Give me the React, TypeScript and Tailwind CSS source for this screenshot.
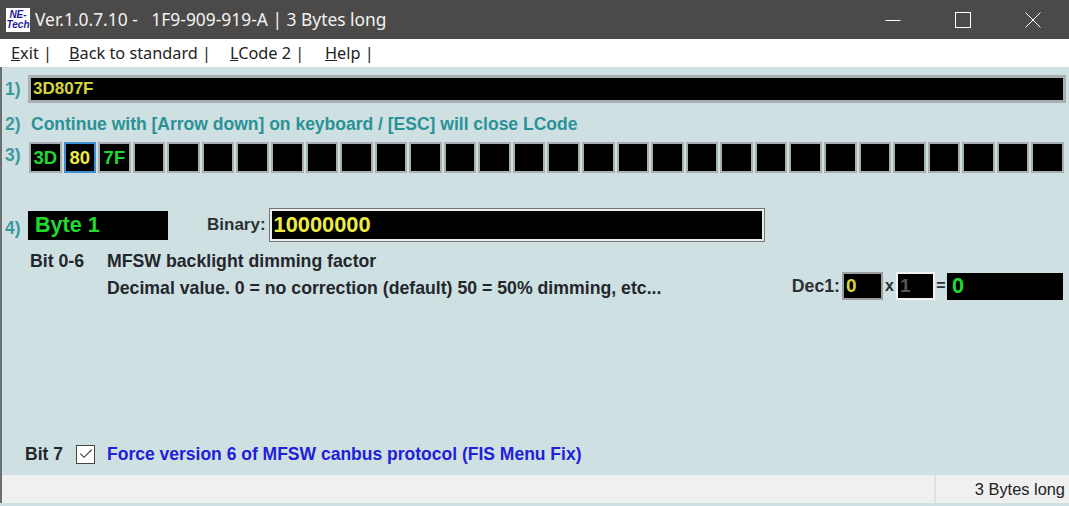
import { Check } from "lucide-react"

const codes = ["3D", "80", "7F"]

function RowLabel({ text, className = "" }: { text: string; className?: string }) {
  return <span className={`w-[24px] shrink-0 pl-[3px] text-[17.5px] font-bold text-[#3a9a9e] ${className}`}>{text}</span>
}

function Logo() {
  return (
    <div className="flex h-[24px] w-[24px] shrink-0 flex-col items-center justify-center bg-white font-['Liberation_Sans',sans-serif] font-bold italic text-[#1c1c9c]">
      <span className="text-[10px] leading-[10px]">NE-</span>
      <span className="text-[10px] leading-[10px]">Tech</span>
    </div>
  )
}

export default function App() {
  const cells = Array.from({ length: 30 }, (_, i) => codes[i] ?? "")

  return (
    <div className="flex h-[506px] w-[1069px] flex-col overflow-hidden bg-[#cfe0e3] font-['Liberation_Sans',sans-serif]">
      {/* title bar */}
      <div className="flex h-[39px] items-center bg-[#4c4a48] pl-[6px] text-white">
        <Logo />
        <span className="ml-[5px] whitespace-pre font-['Noto_Sans',sans-serif] text-[17.4px] text-[#f2f2f2]">
          Ver.1.0.7.10 -   1F9-909-919-A | 3 Bytes long
        </span>
        <div className="ml-auto flex items-center pr-[1px]">
          <div className="flex w-[70px] justify-center">
            <svg width="16" height="16" viewBox="0 0 16 16" fill="none" stroke="currentColor">
              <path d="M0.5 8.5H15.5" />
            </svg>
          </div>
          <div className="flex w-[70px] justify-center">
            <svg width="16" height="16" viewBox="0 0 16 16" fill="none" stroke="currentColor">
              <rect x="0.5" y="0.5" width="15" height="15" />
            </svg>
          </div>
          <div className="flex w-[70px] justify-center">
            <svg width="16" height="16" viewBox="0 0 16 16" fill="none" stroke="currentColor">
              <path d="M0.5 0.5L15.5 15.5M15.5 0.5L0.5 15.5" />
            </svg>
          </div>
        </div>
      </div>

      {/* menu */}
      <div className="flex h-[28px] items-center bg-white pl-[11px] font-['Noto_Sans',sans-serif] text-[16.3px] text-[#222]">
        <span className="w-[58px]"><u>E</u>xit |</span>
        <span className="w-[161px]"><u>B</u>ack to standard |</span>
        <span className="w-[95px]"><u>L</u>Code 2 |</span>
        <span><u>H</u>elp |</span>
      </div>

      {/* form */}
      <div className="flex flex-1 flex-col border-l-2 border-[#6a6f70] pr-[3px]">
        <div className="mt-[8px] flex h-[28px] items-center">
          <RowLabel text="1)" />
          <div className="ml-[2px] flex h-[28px] flex-1 items-center border-[3px] border-[#a9afb0] bg-black pl-[2px] text-[17px] font-bold text-[#d6d63c]">
            3D807F
          </div>
        </div>

        <div className="mt-[8px] flex h-[26px] items-center">
          <RowLabel text="2)" />
          <span className="ml-[5px] whitespace-nowrap text-[17.5px] font-bold text-[#2a9296]">
            Continue with [Arrow down] on keyboard / [ESC] will close LCode
          </span>
        </div>

        <div className="mt-[5px] mr-[2px] flex h-[31px] items-center">
          <RowLabel text="3)" className="mb-[4px]" />
          <div className="ml-[3px] grid flex-1 grid-cols-[repeat(30,1fr)] gap-[2px]">
            {cells.map((c, i) => (
              <div
                key={i}
                className={`flex h-[31px] items-center justify-center border-[2px] bg-black text-[18.5px] font-bold ${
                  i === 1 ? "border-[#3f8fd0] text-[#eded40]" : "border-[#a9afb0] text-[#22d92e]"
                }`}
              >
                {c}
              </div>
            ))}
          </div>
        </div>

        <div className="mt-[37px] flex h-[30px] items-center">
          <RowLabel text="4)" className="mt-[7px]" />
          <div className="ml-[2px] flex h-[29px] w-[140px] items-center bg-black pl-[7px] text-[21.6px] font-bold text-[#22d92e]">
            Byte 1
          </div>
          <span className="ml-[39px] text-[17px] font-bold text-[#2c3034]">Binary:</span>
          <div className="ml-[4px] flex h-[32px] w-[494px] items-center border-[2px] border-[#e8eeee] bg-black pl-[2px] text-[21.8px] font-bold text-[#eded40] outline outline-1 outline-[#777]">
            10000000
          </div>
        </div>

        <div className="mt-[8px] flex">
          <span className="w-[105px] whitespace-nowrap pl-[28px] text-[17.7px] font-bold leading-[27px] text-[#23272b]">Bit 0-6</span>
          <div className="whitespace-nowrap text-[17.7px] font-bold leading-[27px] text-[#23272b]">
            <div>MFSW backlight dimming factor</div>
            <div>Decimal value. 0 = no correction (default) 50 = 50% dimming, etc...</div>
          </div>
          <div className="ml-auto mt-[24px] mr-[3px] flex h-[28px] items-center">
            <span className="text-[17.7px] font-bold text-[#2c3034]">Dec1:</span>
            <div className="ml-[2px] flex h-[28px] w-[41px] items-center border-[2px] border-[#9aa0a2] bg-black pl-[2px] text-[19px] font-bold text-[#d6d63c]">
              0
            </div>
            <span className="w-[13px] text-center text-[16px] font-bold text-[#2c3034]">x</span>
            <div className="flex h-[28px] w-[39px] items-center border-[2px] border-[#eef2f2] bg-black pl-[2px] text-[19px] font-bold text-[#555]">
              1
            </div>
            <span className="w-[12px] text-center text-[16px] font-bold text-[#2c3034]">=</span>
            <div className="flex h-[27px] w-[116px] items-center bg-black pl-[5px] text-[21.6px] font-bold text-[#22d92e]">
              0
            </div>
          </div>
        </div>

        <div className="mt-auto mb-[8px] flex h-[26px] items-center">
          <span className="w-[51px] shrink-0 whitespace-nowrap pl-[23px] text-[17.5px] font-bold text-[#23272b]">Bit 7</span>
          <div className="ml-[23px] flex h-[19px] w-[19px] items-center justify-center border-[1.5px] border-[#444] bg-white">
            <Check className="h-[16px] w-[16px] text-[#444]" strokeWidth={1.6} />
          </div>
          <span className="ml-[12px] whitespace-nowrap text-[17.5px] font-bold text-[#2020d8]">
            Force version 6 of MFSW canbus protocol (FIS Menu Fix)
          </span>
        </div>
      </div>

      {/* status bar */}
      <div className="flex h-[28px] items-center border-l-2 border-[#6a6f70] bg-[#f0f0f0]">
        <div className="h-full flex-1 border-r-2 border-[#e0e0e0]" />
        <span className="w-[133px] pr-[4px] text-right text-[16.4px] text-[#222]">3 Bytes long</span>
      </div>
      <div className="h-[3px] bg-[#cfe0e3]" />
    </div>
  )
}
